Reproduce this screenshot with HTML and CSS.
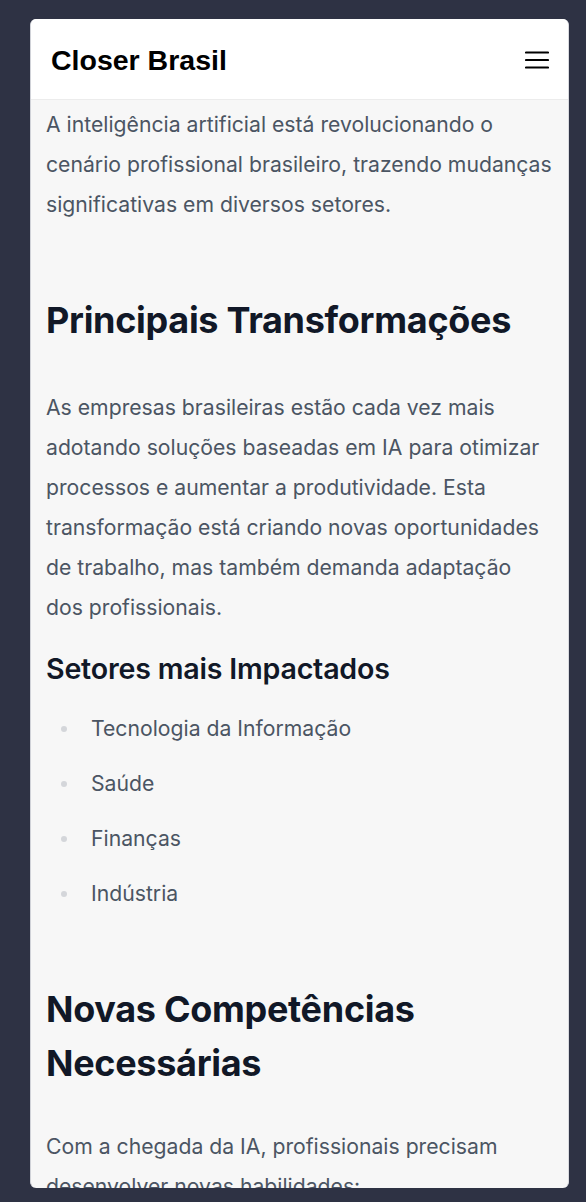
FILE: index.html
```html
<!DOCTYPE html>
<html lang="pt-BR">
<head>
<meta charset="utf-8">
<title>Closer Brasil</title>
<link rel="stylesheet" href="styles.css">
</head>
<body>
<div class="frame">
  <header class="topbar">
    <span class="brand">Closer Brasil</span>
    <button class="menu" aria-label="Menu">
      <svg width="24" height="18" viewBox="0 0 24 18" aria-hidden="true">
        <path d="M1 1.5h22M1 9h22M1 16.5h22" stroke="#000" stroke-width="2.2" stroke-linecap="round" fill="none"/>
      </svg>
    </button>
  </header>
  <main class="article">
    <p class="lead">A inteligência artificial está revolucionando o cenário profissional brasileiro, trazendo mudanças significativas em diversos setores.</p>
    <h2>Principais Transformações</h2>
    <p>As empresas brasileiras estão cada vez mais adotando soluções baseadas em IA para otimizar processos e aumentar a produtividade. Esta transformação está criando novas oportunidades de trabalho, mas também demanda adaptação dos profissionais.</p>
    <h3>Setores mais Impactados</h3>
    <ul class="bullets">
      <li>Tecnologia da Informação</li>
      <li>Saúde</li>
      <li>Finanças</li>
      <li>Indústria</li>
    </ul>
    <h2 class="tight">Novas Competências Necessárias</h2>
    <p>Com a chegada da IA, profissionais precisam desenvolver novas habilidades:</p>
  </main>
</div>
</body>
</html>
```
FILE: styles.css
```css
* { box-sizing: border-box; }

html, body {
  margin: 0;
  padding: 0;
  background: #2e3244;
}

body {
  font-family: Inter, "Noto Sans", sans-serif;
  padding: 19px 17px 0 30px;
  height: 1202px;
  overflow: hidden;
}

.frame {
  width: 539px;
  height: 1169px;
  background: #f7f7f7;
  border-radius: 6px;
  overflow: hidden;
  border-right: 1px solid #d9dadf;
  border-left: 1px solid #d0d2d8;
  display: flex;
  flex-direction: column;
}

.topbar {
  flex: 0 0 auto;
  height: 81px;
  background: #ffffff;
  border-bottom: 1px solid #ececec;
  display: flex;
  align-items: center;
  justify-content: space-between;
  padding: 0 19px 0 20px;
}

.brand {
  font-family: "Liberation Sans", Arial, sans-serif;
  font-weight: 700;
  font-size: 28.5px;
  color: #000;
  margin-top: 2px;
}

.menu {
  border: 0;
  background: none;
  padding: 0;
  width: 24px;
  height: 18px;
  display: block;
  margin-top: 1px;
}

.menu svg { display: block; }

.article {
  padding: 4px 15px 0 15px;
  color: #4b5563;
  font-size: 21.2px;
  line-height: 40px;
}

.article p {
  margin: 0;
}

.article h2 {
  margin: 69px 0 40px;
  font-size: 36px;
  line-height: 54px;
  font-weight: 700;
  color: #111827;
  letter-spacing: -0.3px;
}

.article h2.tight {
  margin-bottom: 36px;
}

.article h3 {
  margin: 24px 0 21px;
  font-size: 28.6px;
  line-height: 36px;
  font-weight: 600;
  color: #111827;
  letter-spacing: -0.2px;
}

.bullets {
  list-style: none;
  margin: 0;
  padding: 0 0 0 45px;
}

.bullets li {
  position: relative;
  margin-bottom: 15px;
}

.bullets li:last-child { margin-bottom: 0; }

.bullets li::before {
  content: "";
  position: absolute;
  left: -30px;
  top: 18px;
  width: 6px;
  height: 6px;
  border-radius: 50%;
  background: #d4d6da;
}
```
